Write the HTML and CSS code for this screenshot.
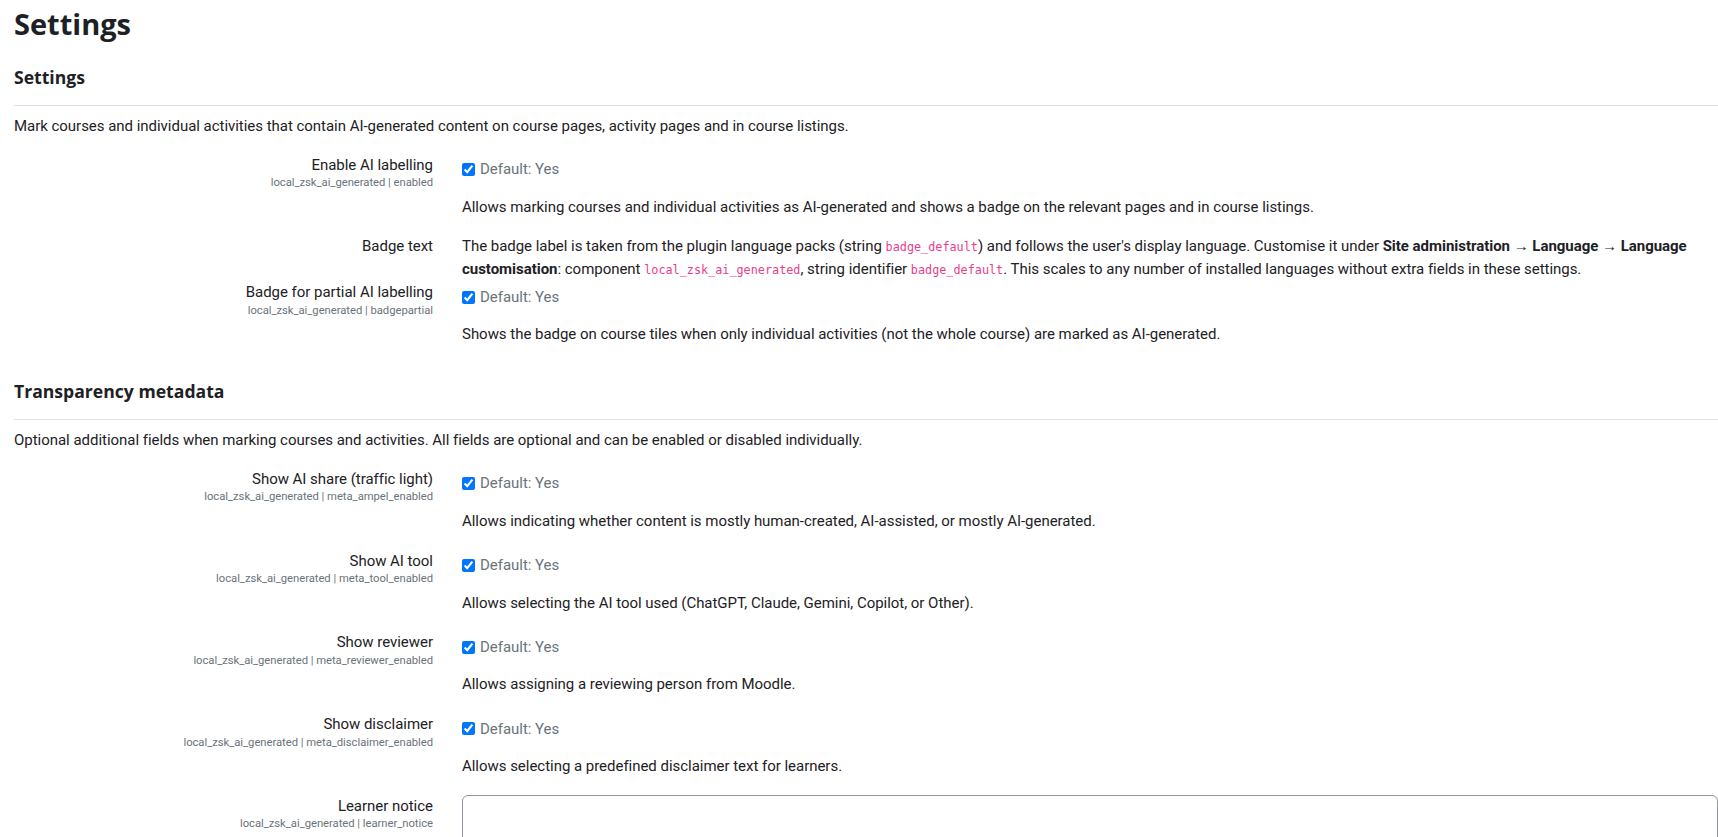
FILE: index.html
```html
<!DOCTYPE html>
<html lang="en">
<head>
<meta charset="utf-8">
<title>Settings</title>
<link rel="stylesheet" href="styles.css">
</head>
<body>
<div class="page">
  <h1 class="page-title">Settings</h1>

  <section class="section">
    <h3 class="section-title">Settings</h3>
    <hr class="divider">
    <p class="section-desc">Mark courses and individual activities that contain AI-generated content on course pages, activity pages and in course listings.</p>

    <div class="item">
      <div class="label-col">
        <div class="label">Enable AI labelling</div>
        <div class="shortname">local_zsk_ai_generated | enabled</div>
      </div>
      <div class="setting-col">
        <div class="check-line"><input type="checkbox" class="check" checked><span class="default">Default: Yes</span></div>
        <p class="desc">Allows marking courses and individual activities as AI-generated and shows a badge on the relevant pages and in course listings.</p>
      </div>
    </div>

    <div class="item item-plain">
      <div class="label-col">
        <div class="label">Badge text</div>
      </div>
      <div class="setting-col">
        <p class="plain-text">The badge label is taken from the plugin language packs (string <code>badge_default</code>) and follows the user's display language. Customise it under <strong>Site administration → Language → Language</strong> <strong>customisation</strong>: component <code>local_zsk_ai_generated</code>, string identifier <code>badge_default</code>. This scales to any number of installed languages without extra fields in these settings.</p>
      </div>
    </div>

    <div class="item">
      <div class="label-col">
        <div class="label">Badge for partial AI labelling</div>
        <div class="shortname">local_zsk_ai_generated | badgepartial</div>
      </div>
      <div class="setting-col">
        <div class="check-line"><input type="checkbox" class="check" checked><span class="default">Default: Yes</span></div>
        <p class="desc">Shows the badge on course tiles when only individual activities (not the whole course) are marked as AI-generated.</p>
      </div>
    </div>
  </section>

  <section class="section section-next">
    <h3 class="section-title">Transparency metadata</h3>
    <hr class="divider">
    <p class="section-desc">Optional additional fields when marking courses and activities. All fields are optional and can be enabled or disabled individually.</p>

    <div class="item">
      <div class="label-col">
        <div class="label">Show AI share (traffic light)</div>
        <div class="shortname">local_zsk_ai_generated | meta_ampel_enabled</div>
      </div>
      <div class="setting-col">
        <div class="check-line"><input type="checkbox" class="check" checked><span class="default">Default: Yes</span></div>
        <p class="desc">Allows indicating whether content is mostly human-created, AI-assisted, or mostly AI-generated.</p>
      </div>
    </div>

    <div class="item">
      <div class="label-col">
        <div class="label">Show AI tool</div>
        <div class="shortname">local_zsk_ai_generated | meta_tool_enabled</div>
      </div>
      <div class="setting-col">
        <div class="check-line"><input type="checkbox" class="check" checked><span class="default">Default: Yes</span></div>
        <p class="desc">Allows selecting the AI tool used (ChatGPT, Claude, Gemini, Copilot, or Other).</p>
      </div>
    </div>

    <div class="item">
      <div class="label-col">
        <div class="label">Show reviewer</div>
        <div class="shortname">local_zsk_ai_generated | meta_reviewer_enabled</div>
      </div>
      <div class="setting-col">
        <div class="check-line"><input type="checkbox" class="check" checked><span class="default">Default: Yes</span></div>
        <p class="desc">Allows assigning a reviewing person from Moodle.</p>
      </div>
    </div>

    <div class="item">
      <div class="label-col">
        <div class="label">Show disclaimer</div>
        <div class="shortname">local_zsk_ai_generated | meta_disclaimer_enabled</div>
      </div>
      <div class="setting-col">
        <div class="check-line"><input type="checkbox" class="check" checked><span class="default">Default: Yes</span></div>
        <p class="desc">Allows selecting a predefined disclaimer text for learners.</p>
      </div>
    </div>

    <div class="item">
      <div class="label-col">
        <div class="label">Learner notice</div>
        <div class="shortname">local_zsk_ai_generated | learner_notice</div>
      </div>
      <div class="setting-col setting-textarea">
        <textarea class="textarea" rows="8"></textarea>
      </div>
    </div>
  </section>
</div>
</body>
</html>
```
FILE: styles.css
```css
html, body {
  margin: 0;
  padding: 0;
  background: #ffffff;
}

body {
  font-family: Roboto, "Liberation Sans", sans-serif;
  font-size: 15px;
  line-height: 22.5px;
  color: #1d2125;
  letter-spacing: -0.03px;
  overflow: hidden;
}

.page {
  padding-left: 14px;
}

.page-title {
  margin: 6.7px 0 0;
  font-family: "Open Sans", Roboto, sans-serif;
  font-size: 29px;
  line-height: 33.6px;
  font-weight: 700;
  letter-spacing: 0;
  color: #1d2125;
}

.section-title {
  margin: 26.5px 0 0;
  font-family: "Open Sans", Roboto, sans-serif;
  font-size: 17.6px;
  line-height: 21px;
  font-weight: 700;
  letter-spacing: 0;
  color: #1d2125;
}

.section-next .section-title {
  margin-top: 35px;
}

.divider {
  margin: 17px 0 9px;
  border: 0;
  border-top: 1px solid #dee2e6;
  height: 0;
}

.section-desc {
  margin: 0 0 16.5px;
}

.item {
  display: grid;
  grid-template-columns: 419px 1fr;
  column-gap: 29px;
  margin-bottom: 17.2px;
}

.item-plain {
  margin-bottom: 0;
}

.label-col {
  text-align: right;
}

.label {
  color: #1d2125;
}

.shortname {
  font-size: 11.25px;
  line-height: 14.6px;
  color: #6a737b;
}

.setting-col {
  padding-top: 4.5px;
  min-width: 0;
}

.item-plain .setting-col,
.setting-textarea {
  padding-top: 0;
}

.check-line {
  display: flex;
  align-items: center;
  height: 22.5px;
}

.check {
  width: 13px;
  height: 13px;
  margin: 0 5px 0 0;
}

.default {
  color: #6a737b;
}

.desc {
  margin: 15px 0 0;
}

.plain-text {
  margin: 0;
  max-width: 1240px;
  line-height: 23px;
}

code {
  font-family: "DejaVu Sans Mono", "Liberation Mono", monospace;
  font-size: 11.8px;
  line-height: 1;
  color: #e83e8c;
  letter-spacing: 0;
}

strong {
  font-weight: 700;
}

.textarea {
  display: block;
  box-sizing: border-box;
  width: 100%;
  height: 160px;
  border: 1px solid #8f959e;
  border-radius: 6px;
  padding: 6px 12px;
  font: inherit;
  resize: none;
}
```
